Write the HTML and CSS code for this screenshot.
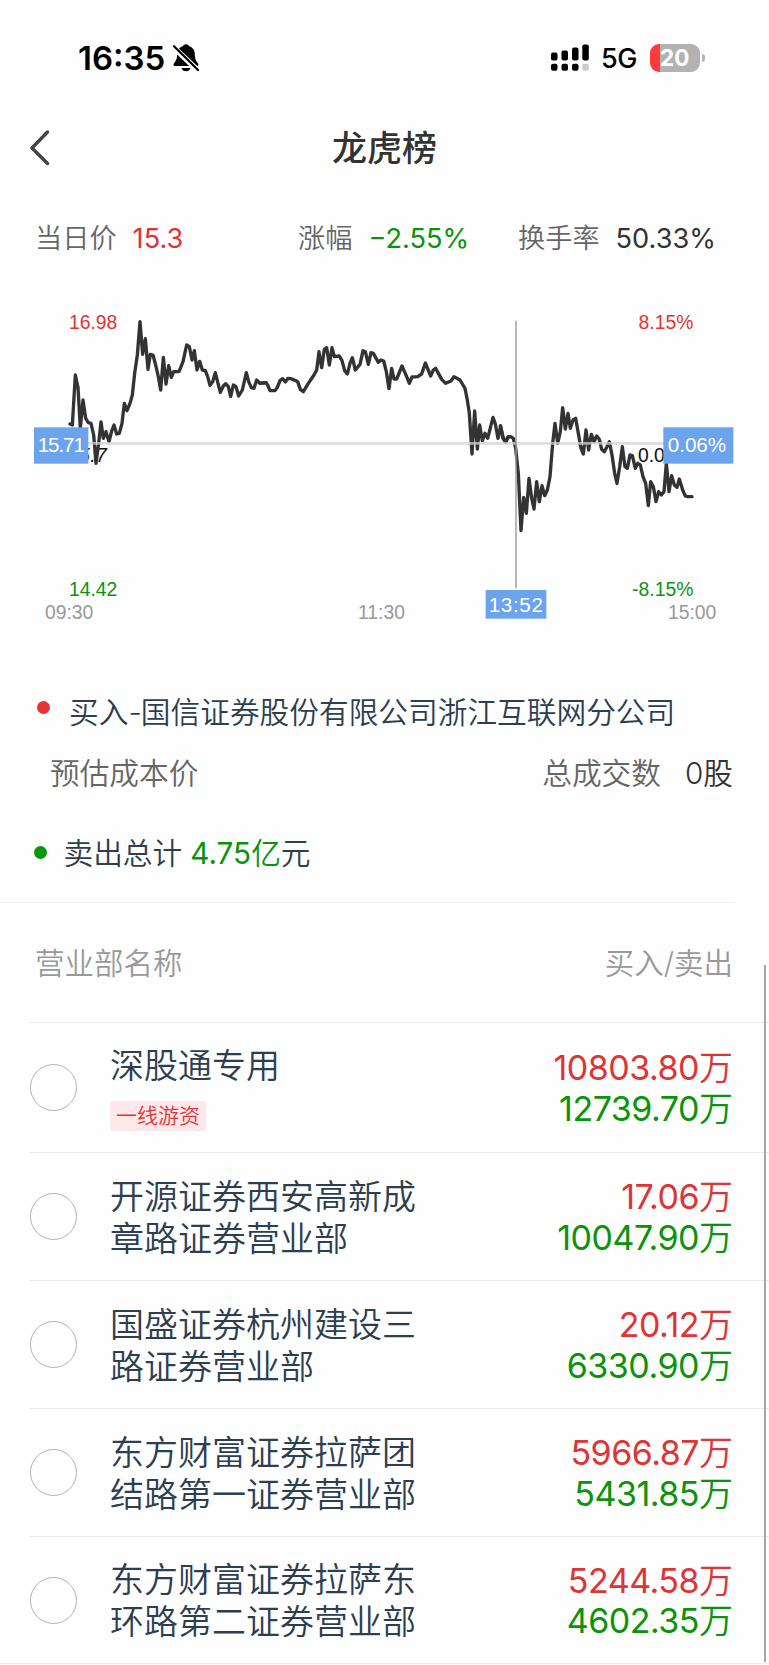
FILE: index.html
```html
<!DOCTYPE html>
<html lang="zh-CN">
<head>
<meta charset="utf-8">
<title>龙虎榜</title>
<link rel="stylesheet" href="styles.css">
</head>
<body>
<header class="status">
  <span class="clock">16:35</span>
  <svg class="bell" width="26" height="28" viewBox="0 0 26 28">
    <path d="M13 0.3c-1.5 0-2.6.8-3.2 1.9C5.8 3.600 4.200 6.500 4.200 10c0 5.500-1.700 7.200-3.100 9.200C0 20.800.4 22 2.200 22h21.600c1.800 0 2.200-1.200 1.100-2.800-1.400-2-3.100-3.700-3.100-9.200 0-3.500-1.600-6.400-5.600-7.800C15.600 1.100 14.500.3 13 .3zM8.500 24h9c-.6 2-2.200 3.300-4.500 3.300S9.100 26 8.500 24z" fill="#000"/>
    <path d="M-.5 2.200 25.500 27.200" stroke="#fff" stroke-width="5.500"/>
    <path d="M1 2.200 25 26" stroke="#000" stroke-width="2.200" stroke-linecap="round"/>
  </svg>
  <svg class="signal" width="38" height="28" viewBox="0 0 38 28">
    <rect x="0" y="8.500" width="6.500" height="8" rx="2"/>
    <rect x="10.500" y="6.500" width="6.500" height="10" rx="2"/>
    <rect x="21" y="3.500" width="6.500" height="13" rx="2"/>
    <rect x="31.300" y="0.500" width="6.500" height="16" rx="2"/>
    <rect x="0" y="19.800" width="6.500" height="7" rx="2"/>
    <rect x="10.500" y="19.800" width="6.500" height="7" rx="2"/>
    <rect x="21" y="19.800" width="6.500" height="7" rx="2"/>
    <rect x="31.300" y="19.800" width="6.500" height="7" rx="2" fill="#ccc"/>
  </svg>
  <span class="net">5G</span>
  <span class="battery">20</span>
  <span class="nub"></span>
</header>

<nav class="nav">
  <svg class="back" width="20" height="36" viewBox="0 0 20 36"><path d="M17.500 2 2 18 17.500 33.500" fill="none" stroke="#444" stroke-width="3.400" stroke-linecap="round" stroke-linejoin="round"/></svg>
  <h1 class="title">龙虎榜</h1>
</nav>

<section class="stats">
  <div class="stat"><span class="label">当日价</span><span class="red">15.3</span></div>
  <div class="stat"><span class="label">涨幅</span><span class="green">−2.55%</span></div>
  <div class="stat"><span class="label">换手率</span><span class="dark">50.33%</span></div>
</section>

<svg class="chart" viewBox="0 0 2247 990" width="749" height="330">
  <g font-size="58">
    <text x="147" y="86" fill="#e03434">16.98</text>
    <text x="2020" y="86" fill="#e03434" text-anchor="end">8.15%</text>
    <text x="147" y="888" fill="#0b930b">14.42</text>
    <text x="2020" y="888" fill="#0b930b" text-anchor="end">-8.15%</text>
    <text x="144" y="486" fill="#111" font-style="italic" textLength="116">15.7</text>
    <text x="1854" y="487" fill="#111">0.06%</text>
    <g fill="#999">
      <text x="75" y="957">09:30</text>
      <text x="1014" y="957">11:30</text>
      <text x="1944" y="957">15:00</text>
    </g>
  </g>
  <g class="line">
    <polyline points="150,372 157,375 166,225 174,262 181,385 189,300 197,355 205,368 213,370 221,405 228,490 236,430 243,366 250,415 258,395 267,425 275,393 282,375 290,402 298,400 306,370 313,310 321,332 330,310 337,285 344,220 352,165 360,65 368,163 376,116 384,208 391,163 399,165 407,195 415,230 422,270 430,172 438,252 446,197 454,232 461,215 477,215 489,185 500,135 508,140 516,180 523,152 531,210 539,184 547,210 556,212 563,230 570,256 578,245 586,218 594,250 601,277 610,258 617,251 625,260 632,290 640,255 648,260 656,288 667,270 679,218 686,245 694,263 702,265 710,240 720,250 738,248"/>
    <polyline transform="translate(720)" points="0,250 18,248 23,255 30,272 45,272 52,262 60,242 68,236 76,246 84,235 92,236 105,241 113,245 121,268 130,275 145,250 162,225 170,210 177,155 185,203 193,148 200,143 208,195 216,143 223,170 238,168 246,182 254,212 262,222 270,190 277,173 286,210 300,193 309,152 316,155 325,193 333,158 340,160 355,187 363,180 371,183 379,215 387,266 395,205 402,237 410,237 426,198 440,230 448,250 456,231 473,230 485,222 496,189 512,228 520,210 527,205 545,238 557,250 573,243 582,230 600,240 615,265 622,300 628,340 636,462 644,333 652,447 659,375 667,422 675,400 683,415 699,352 706,372 714,415 722,378 730,415 738,425 745,410"/>
    <polyline transform="translate(1290)" points="151,378 159,415 167,427 173,412 182,410 190,415 197,445 205,520 213,692 221,592 229,640 237,535 245,595 252,627 260,545 268,605 276,557 284,587 292,570 300,530 308,430 315,370 323,430 331,395 338,323 346,387 354,340 361,385 369,360 377,355 385,400 393,445 400,462 408,390 416,450 424,403 432,425 440,408 448,418 455,448 463,455 471,440 478,425 486,465 494,520 501,550 509,500 517,440 525,500 532,505 540,465 547,467 556,505 563,490 571,495 579,530 587,550 595,617 602,545 610,560 618,605 626,575 634,585 642,575 649,490 657,575 665,527 673,555 681,562 688,537 698,570 706,588 712,590 726,590"/>
  </g>
  <path d="M200 430H1935" stroke="#d2d2d2" stroke-opacity=".75" stroke-width="8"/>
  <path d="M1488 62V865" stroke="#999" stroke-opacity=".85" stroke-width="5"/>
  <g fill="#6ba3ed">
    <rect x="42" y="382" width="163" height="109"/>
    <rect x="1930" y="382" width="210" height="109"/>
    <rect x="1397" y="870" width="182" height="86"/>
  </g>
  <g font-size="62" fill="#fff">
    <text x="53" y="457" textLength="142">15.71</text>
    <text x="1943" y="457">0.06%</text>
    <text x="1406" y="935" textLength="163">13:52</text>
  </g>
</svg>

<section class="seat">
  <i class="dot dot-red"></i><span>买入<span class="dash">-</span>国信证券股份有限公司浙江互联网分公司</span>
</section>
<section class="cost">
  <span class="cost-name">预估成本价</span><span>总成交数</span><span class="shares">0股</span>
</section>
<section class="total">
  <i class="dot dot-green"></i><span>卖出总计</span><span class="sum"><span class="green">4.75<span class="unit">亿</span></span>元</span>
</section>

<div class="thead"><span>营业部名称</span><span>买入/卖出</span></div>

<main class="list">
  <article class="row row-first">
    <i class="radio"></i>
    <div class="name">深股通专用<br><span class="tag">一线游资</span></div>
    <div class="money"><div class="red">10803.80<span class="unit">万</span></div><div class="green">12739.70<span class="unit">万</span></div></div>
  </article>
  <article class="row">
    <i class="radio"></i>
    <div class="name">开源证券西安高新成章路证券营业部</div>
    <div class="money"><div class="red">17.06<span class="unit">万</span></div><div class="green">10047.90<span class="unit">万</span></div></div>
  </article>
  <article class="row">
    <i class="radio"></i>
    <div class="name">国盛证券杭州建设三路证券营业部</div>
    <div class="money"><div class="red">20.12<span class="unit">万</span></div><div class="green">6330.90<span class="unit">万</span></div></div>
  </article>
  <article class="row">
    <i class="radio"></i>
    <div class="name">东方财富证券拉萨团结路第一证券营业部</div>
    <div class="money"><div class="red">5966.87<span class="unit">万</span></div><div class="green">5431.85<span class="unit">万</span></div></div>
  </article>
  <article class="row row-last">
    <i class="radio"></i>
    <div class="name">东方财富证券拉萨东环路第二证券营业部</div>
    <div class="money"><div class="red">5244.58<span class="unit">万</span></div><div class="green">4602.35<span class="unit">万</span></div></div>
  </article>
</main>
<div class="scrollbar"></div>
</body>
</html>
```

FILE: styles.css
```css
* { box-sizing: border-box; }
body {
  margin: 0;
  width: 769px;
  height: 1665px;
  position: relative;
  overflow: hidden;
  background: #fefefe;
  color: #2c3e50;
  font-family: Inter, "Noto Sans CJK SC", sans-serif;
  font-weight: 350;
}
.red { color: #dd3535; font-weight: 400; }
.green { color: #0b930b; font-weight: 400; }
.dark { color: #333; font-weight: 400; }

.status {
  display: flex;
  align-items: center;
  height: 116px;
  padding-left: 78px;
  color: #000;
}
.clock { width: 95px; font-size: 33px; font-weight: 600; line-height: 36px; padding-bottom: 1px; white-space: nowrap; }
.bell { margin-right: 352px; }
.signal { margin-right: 12px; }
.net { width: 49px; font-size: 27px; font-weight: 500; letter-spacing: -0.5px; }
.battery {
  width: 50px;
  height: 28px;
  border-radius: 9px;
  background: linear-gradient(90deg, #ff3a3c 10.500px, #b2b2b2 10.500px);
  color: #fff;
  font-size: 22.500px;
  font-weight: 700;
  line-height: 27px;
  padding-left: 10px;
}
.nub { width: 3px; height: 8px; margin-left: 1.500px; border-radius: 0 4px 4px 0; background: #b5b5b5; }

.nav {
  display: grid;
  grid-template-columns: 30px 1fr 30px;
  align-items: center;
  height: 64px;
  padding: 0 30px;
}
.title { margin: 0; text-align: center; font-size: 35px; font-weight: 500; line-height: 50px; color: #333; }

.stats {
  display: grid;
  grid-template-columns: 263px 220px 1fr;
  height: 120px;
  padding: 39px 0 0 35px;
  font-size: 27.200px;
  line-height: 40px;
}
.stat { display: flex; gap: 16px; white-space: nowrap; }
.label { color: #666; }

.chart { display: block; margin-left: 20px; font-family: "Liberation Sans", Arial, sans-serif; font-weight: 400; }
.line { fill: none; stroke: #333; stroke-width: 10; stroke-linejoin: round; stroke-linecap: round; }

.seat, .cost, .total { display: flex; align-items: center; font-size: 29.700px; line-height: 44px; white-space: nowrap; }
.dash { letter-spacing: -1px; }
.dot { width: 13px; height: 13px; border-radius: 50%; }
.dot-red { background: #e63333; margin: -10px 19px 0 0; }
.dot-green { background: #0a960a; margin: -1px 16.500px 0 0; }
.seat { height: 62px; margin-top: 51px; padding-left: 37px; }
.cost { height: 60px; padding: 0 36px 0 50px; color: #666; }
.cost-name { flex: 1; }
.shares { margin-left: 24px; color: #333; }
.total { height: 99px; padding: 1px 0 0 34px; }
.sum { margin-left: 8px; }

.thead {
  display: flex;
  justify-content: space-between;
  height: 120px;
  margin-right: 35px;
  padding: 0 1px 0 35px;
  border-top: 1px solid #eee;
  color: #999;
  font-size: 29.500px;
  line-height: 121px;
}
.row {
  display: flex;
  align-items: center;
  height: 128px;
  margin-left: 30px;
  padding-right: 36px;
  border-top: 1px solid #ebebeb;
}
.row-first { height: 130px; }
.row-last { height: 127px; }
.list { border-bottom: 1px solid #eee; }
.radio { width: 47px; height: 47px; border: 1px solid #b4b4b4; border-radius: 50%; }
.name { width: 307px; margin-left: 33px; padding-top: 2px; font-size: 34px; line-height: 42px; }
.row-first .name { padding-top: 1px; }
.tag {
  display: block;
  width: 96px;
  height: 30px;
  margin-top: 14px;
  border-radius: 2px;
  background: #ffe8e9;
  color: #dd3535;
  font-size: 21px;
  line-height: 29px;
  text-align: center;
}
.money { flex: 1; padding-top: 2px; text-align: right; font-size: 34px; line-height: 40.500px; letter-spacing: -0.5px; }
.unit { letter-spacing: 0; font-weight: 350; }

.scrollbar { position: absolute; left: 764px; top: 965px; width: 2px; height: 697px; background: #a6a6a6; }
```
